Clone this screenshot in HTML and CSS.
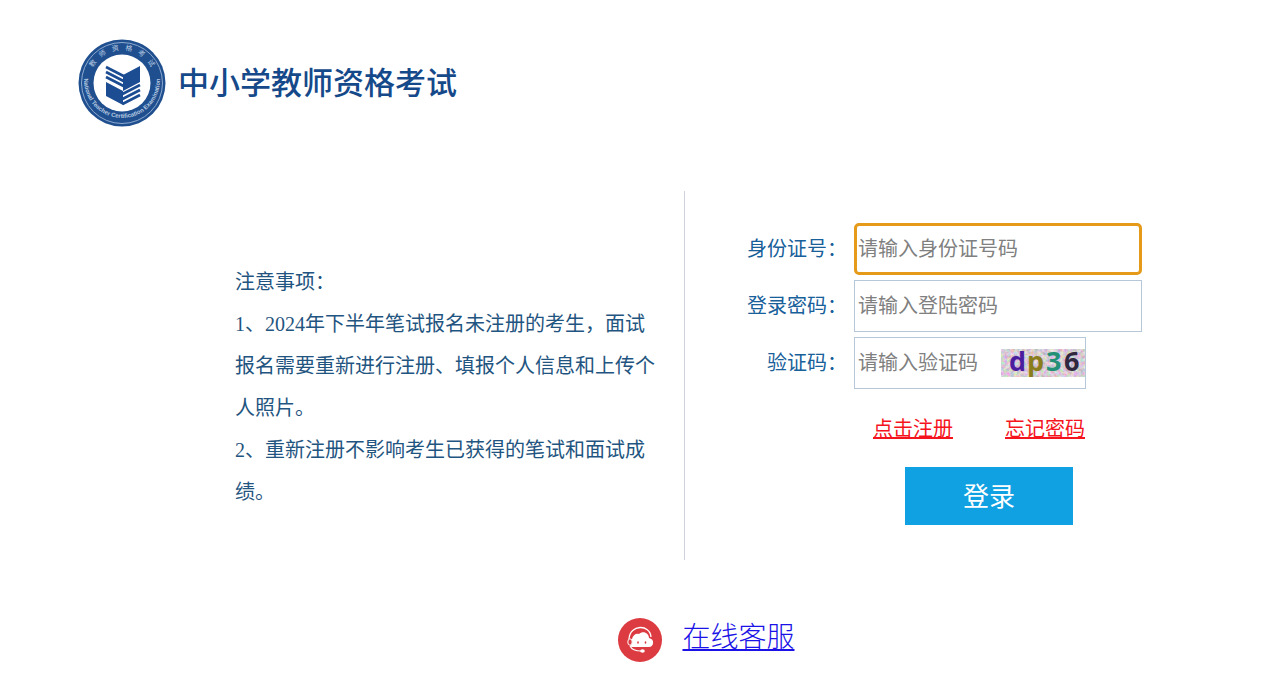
FILE: index.html
```
<!DOCTYPE html>
<html lang="zh-CN">
<head>
    <meta charset="UTF-8">
    <meta name="viewport" content="width=device-width, initial-scale=1.0">
    <title>中小学教师资格考试</title>
    <link rel="stylesheet" href="styles.css">
</head>
<body>
    <header class="header">
        <svg class="logo" viewBox="0 0 88 88" aria-hidden="true">
            <defs>
                <path id="ringTop" d="M11 44a33 33 0 0 1 66 0"/>
                <path id="ringBottom" d="M6 41a38 38 0 0 0 76 0"/>
            </defs>
            <circle cx="44" cy="44" r="43.500" fill="#1f4f8f"/>
            <circle cx="44" cy="44" r="40.500" fill="none" stroke="#8fabd0" stroke-width="1"/>
            <circle cx="44" cy="44" r="28.500" fill="#fff"/>
            <text class="ring-cn"><textPath href="#ringTop" startOffset="50%" text-anchor="middle">教   师   资   格   考   试</textPath></text>
            <text class="ring-en"><textPath href="#ringBottom" startOffset="50%" text-anchor="middle">National Teacher Certification Examination</textPath></text>
            <path fill="#1c4d92" d="M45 36l17-9v16l-17 9zM28 43l17 9v14l-17-9z"/>
            <path fill="none" stroke="#1c4d92" stroke-width="2.600" d="M28 28l17.500 9M28 33l17.500 9M28 38l17.500 9M44.500 55L62 46M44.500 60L62 51M44.500 65L62 56"/>
        </svg>
        <h1>中小学教师资格考试</h1>
    </header>

    <main class="main">
        <section class="notice">
            <div class="notice-text">
                <p>注意事项：</p>
                <p>1、2024年下半年笔试报名未注册的考生，面试报名需要重新进行注册、填报个人信息和上传个人照片。</p>
                <p>2、重新注册不影响考生已获得的笔试和面试成绩。</p>
            </div>
        </section>

        <form class="login">
            <div class="row">
                <label for="idCard">身份证号：</label>
                <input class="field active" type="text" id="idCard" placeholder="请输入身份证号码">
            </div>
            <div class="row">
                <label for="password">登录密码：</label>
                <input class="field" type="password" id="password" placeholder="请输入登陆密码">
            </div>
            <div class="row">
                <label for="code">验证码：</label>
                <div class="code-box">
                    <input type="text" id="code" placeholder="请输入验证码">
                    <svg class="captcha" viewBox="0 0 84 28" role="img" aria-label="验证码">
                        <filter id="noise" x="0" y="0" width="100%" height="100%">
                            <feTurbulence type="fractalNoise" baseFrequency="0.3" numOctaves="2" seed="4"/>
                            <feColorMatrix values="0.8 0 0 0 0.29  0 0.8 0 0 0.2  0 0 0.8 0 0.26  0 0 0 0 1"/>
                        </filter>
                        <rect width="84" height="28" filter="url(#noise)"/>
                        <text x="8" y="22" fill="#4a1d9e">d</text>
                        <text x="26" y="22" fill="#8a7d1c">p</text>
                        <text x="45" y="22" fill="#259078">3</text>
                        <text x="63" y="22" fill="#30283f">6</text>
                    </svg>
                </div>
            </div>
            <div class="links">
                <a href="#">点击注册</a>
                <a href="#">忘记密码</a>
            </div>
            <button type="button" class="submit">登录</button>
        </form>
    </main>

    <footer class="footer">
        <svg class="service-icon" viewBox="0 0 44 44" aria-hidden="true">
            <circle cx="22" cy="22" r="22" fill="#dc3b41"/>
            <path fill="none" stroke="#fff" stroke-width="1.300" d="M11 21c1-15 21-15 22-2"/>
            <path fill="#fff" d="M14 29c-3 0-3-8 0-8 1-4 4-6 7-5 4-4 10-1 10 4 6 1 5 9 0 9z"/>
            <ellipse cx="12" cy="24" rx="2.200" ry="3.200" fill="#dc3b41" stroke="#fff" stroke-width="1"/>
            <ellipse cx="20" cy="24.500" rx="0.800" ry="1.300" fill="#dc3b41"/>
            <ellipse cx="27.500" cy="24.500" rx="0.800" ry="1.300" fill="#dc3b41"/>
            <path fill="none" stroke="#fff" stroke-width="1.200" d="M12 28c2 4 6 5 11 5"/>
            <ellipse cx="24.500" cy="33" rx="2.300" ry="1.700" fill="#fff"/>
        </svg>
        <a href="#">在线客服</a>
    </footer>
</body>
</html>
```
FILE: styles.css
```
* {
    box-sizing: border-box;
}

body {
    margin: 0;
    background-color: #fff;
    font-family: "Liberation Serif", "Noto Sans CJK SC", serif;
    font-size: 20px;
    color: #1f5580;
}

.header {
    display: flex;
    gap: 12px;
    padding: 39px 78px 64px;
}

.logo {
    width: 88px;
    height: 88px;
}

.ring-cn,
.ring-en {
    fill: #b9cbe2;
    font-family: "Liberation Sans", "Noto Sans CJK SC", sans-serif;
}

.ring-cn {
    font-size: 7px;
    white-space: pre;
}

.ring-en {
    font-size: 6px;
    font-weight: bold;
}

h1 {
    margin: 0;
    font-family: "Noto Sans CJK SC", sans-serif;
    font-size: 31px;
    font-weight: 500;
    line-height: 84px;
    color: #15498a;
}

.main {
    display: grid;
    grid-template-columns: 685fr 595fr;
}

.notice {
    display: flex;
    justify-content: flex-end;
    padding: 70px 29px 0 20px;
    border-right: 1px solid #ccd3da;
}

.notice-text {
    width: 420px;
    line-height: 42px;
}

.notice-text p {
    margin: 0;
}

.login {
    display: flex;
    flex-direction: column;
    gap: 5px;
    padding: 32px 20px 35px 62px;
}

.row {
    display: flex;
    align-items: center;
    gap: 7px;
}

.row label {
    width: 100px;
    line-height: 32px;
    text-align: right;
    color: #17609a;
}

.row input {
    font-family: "Noto Sans CJK SC", sans-serif;
    font-size: 20px;
    outline: none;
}

.row input::placeholder {
    color: #808080;
}

.field {
    width: 288px;
    height: 52px;
    padding: 0 3px 4px;
    border: 1px solid #b5c7d8;
}

.field.active {
    padding: 0 1px 4px;
    border: 3px solid #e59a1a;
    border-radius: 5px;
}

.code-box {
    display: flex;
    align-items: center;
    width: 232px;
    height: 52px;
    border: 1px solid #b5c7d8;
}

.code-box input {
    flex: 1;
    min-width: 0;
    height: 50px;
    padding: 0 3px 4px;
    border: 0;
}

.captcha {
    width: 84px;
    height: 28px;
    overflow: visible;
}

.captcha text {
    font-family: "Open Sans", sans-serif;
    font-size: 27px;
    font-weight: bold;
}

.links {
    display: flex;
    gap: 52px;
    margin: 14px 0 12px 126px;
    line-height: 42px;
}

.links a {
    color: #f5141e;
}

.submit {
    width: 168px;
    height: 58px;
    margin-left: 158px;
    padding-bottom: 4px;
    border: 0;
    background-color: #0fa1e2;
    color: #fff;
    font-family: "Noto Sans CJK SC", sans-serif;
    font-size: 26px;
    cursor: pointer;
}

.footer {
    display: flex;
    justify-content: center;
    gap: 20px;
    padding: 58px 0 20px 133px;
}

.service-icon {
    width: 44px;
    height: 44px;
}

.footer a {
    color: #1a12e6;
    font-size: 28px;
    font-weight: 300;
    line-height: 40px;
}
```
